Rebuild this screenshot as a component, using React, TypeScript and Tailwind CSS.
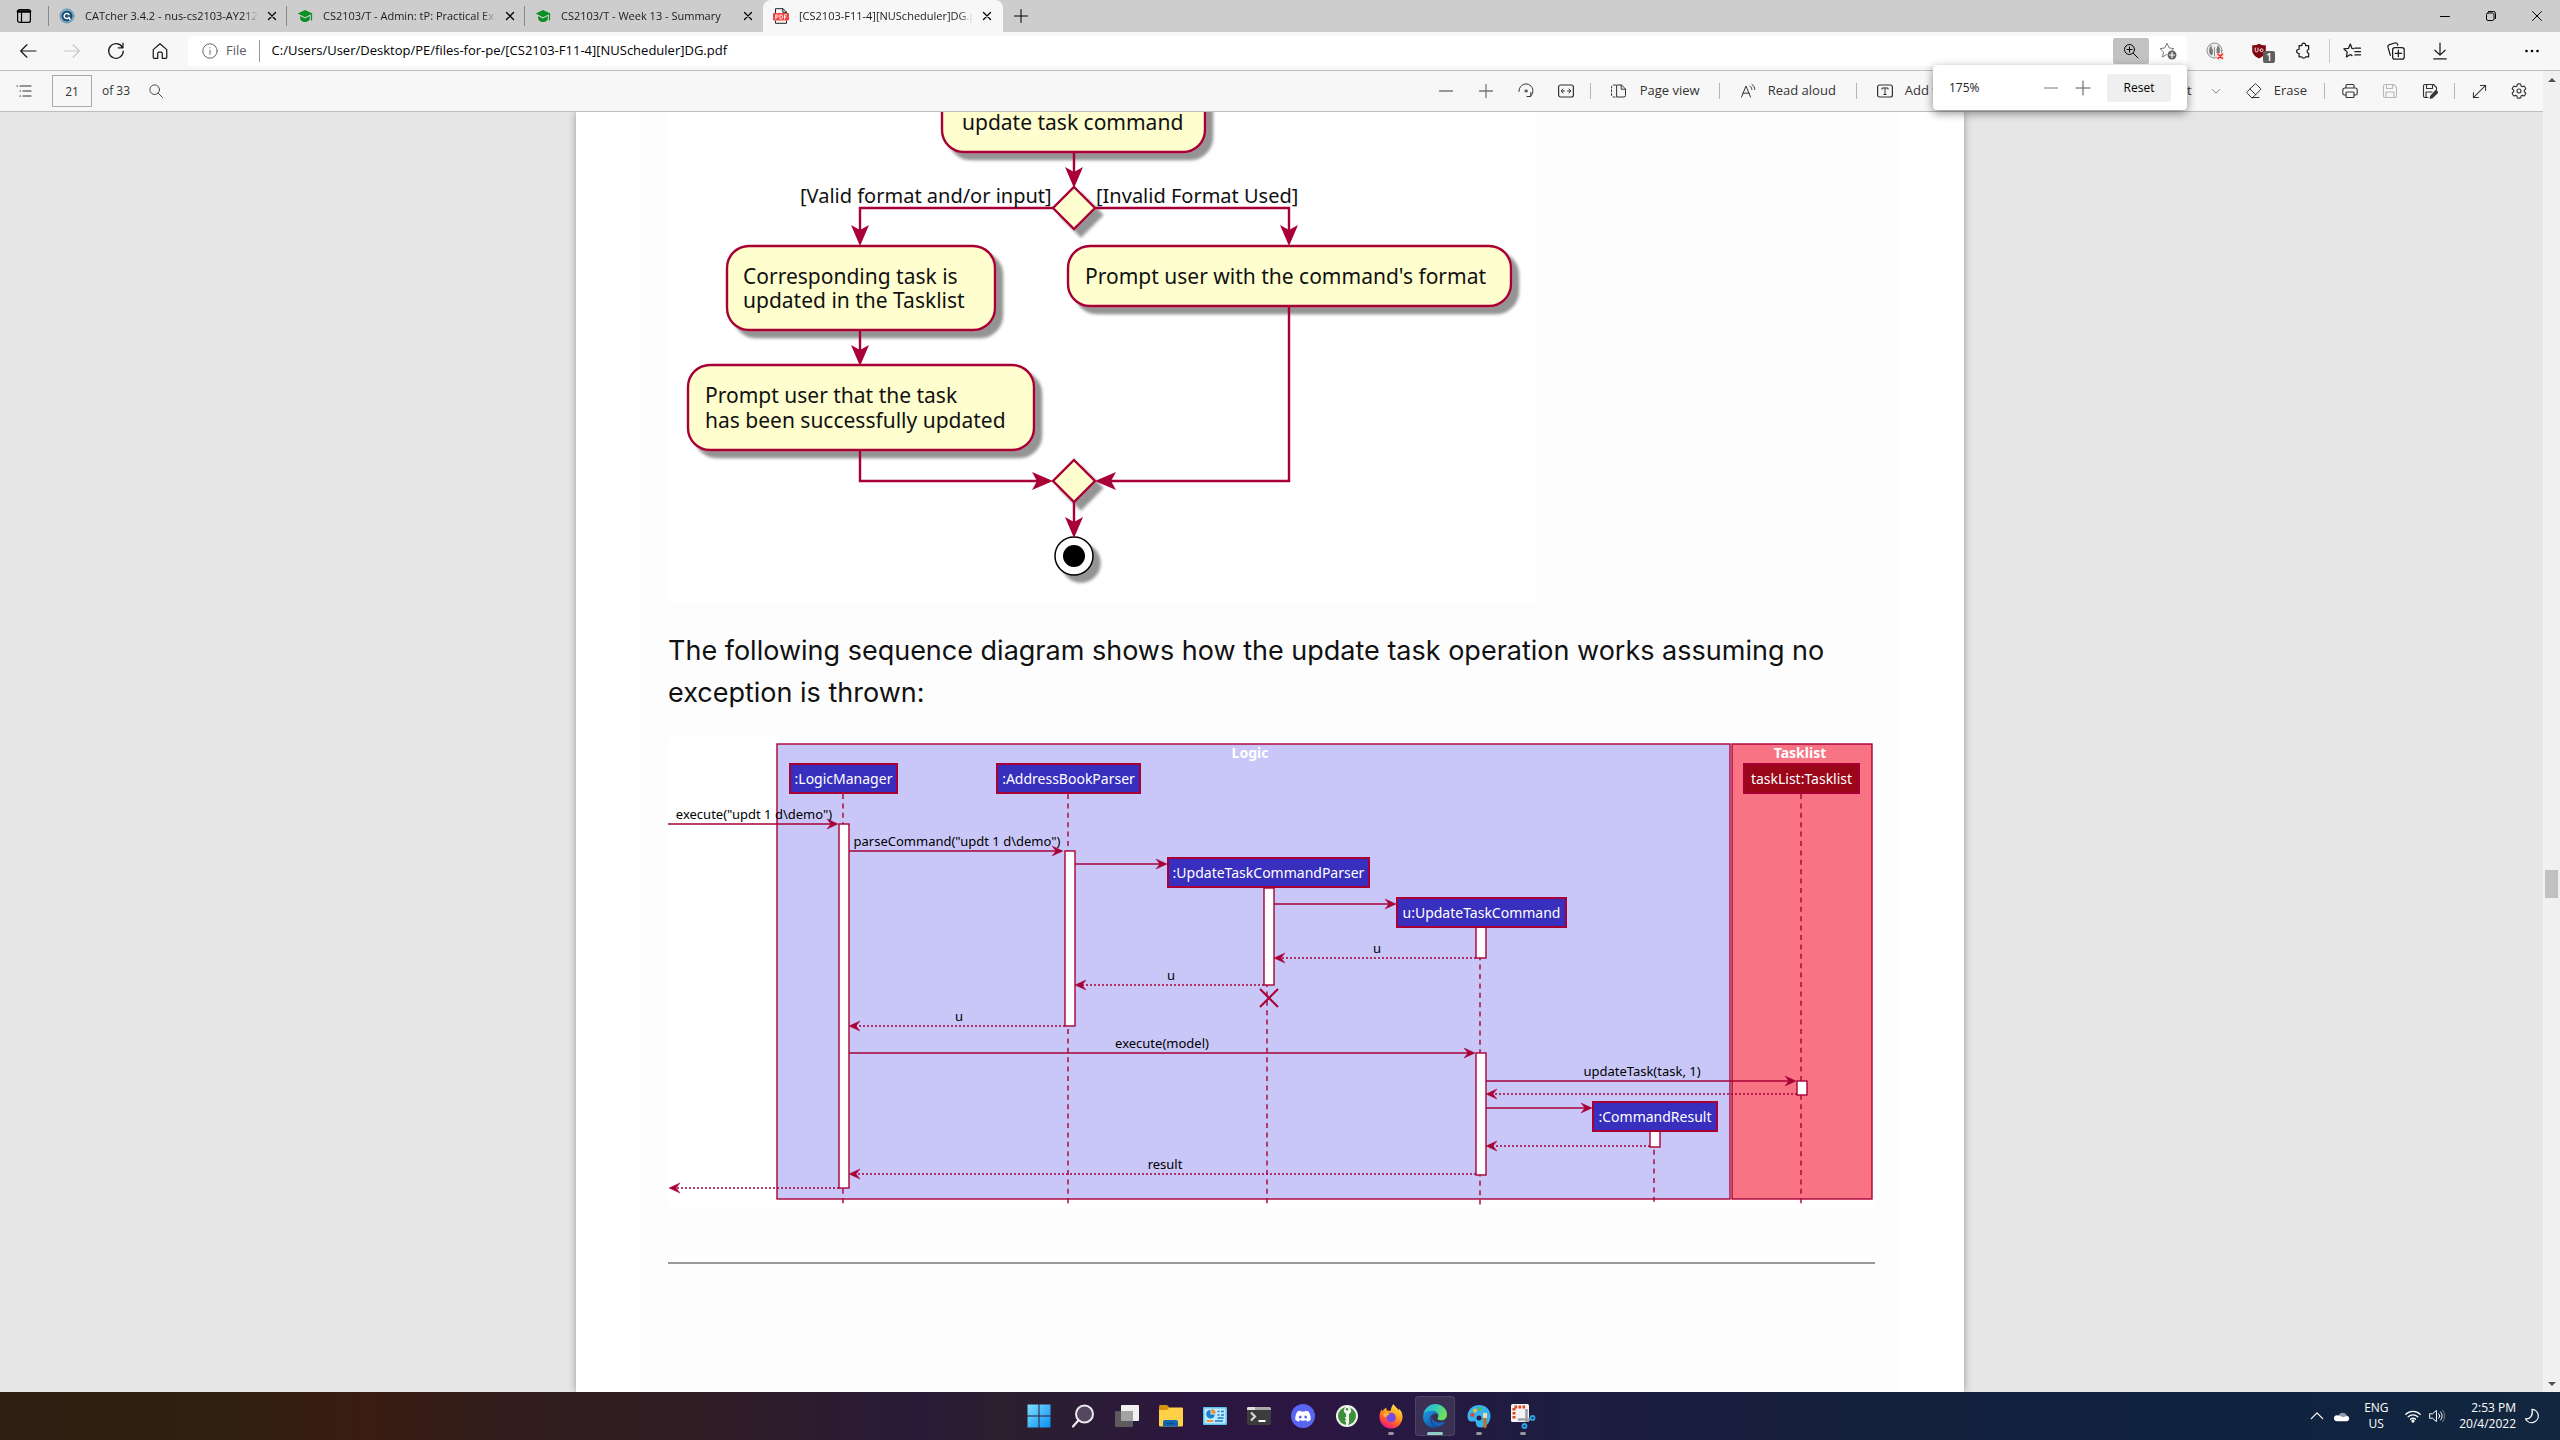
import type { ReactNode } from "react";

const RED = "#a80036";

/* ------------------------------------------------------------------ icons */

type IconProps = { children: ReactNode; className?: string; box?: number; sw?: number };

function Icon({ children, className = "size-4", box = 16, sw = 1 }: IconProps) {
  return (
    <svg
      viewBox={`0 0 ${box} ${box}`}
      className={`shrink-0 ${className}`}
      fill="none"
      stroke="currentColor"
      strokeWidth={sw}
      strokeLinecap="round"
      strokeLinejoin="round"
      aria-hidden="true"
    >
      {children}
    </svg>
  );
}

const CloseIcon = () => (
  <Icon className="size-3" box={12} sw={1.3}>
    <path d="M2.5 2.5l7 7M9.5 2.5l-7 7" />
  </Icon>
);

const CatcherIcon = () => (
  <Icon>
    <circle cx="8" cy="8" r="7" fill="#8fbdd6" stroke="#5f93b3" />
    <circle cx="8" cy="8" r="5.6" fill="#1d4f70" stroke="none" />
    <path d="M10 6.6A2.6 2.6 0 1 0 10 9.4L11 11.6" stroke="#fff" strokeWidth="1.5" />
  </Icon>
);

const CapIcon = () => (
  <Icon>
    <path d="M8 2L15.5 5.6 8 9.2.8 5.6z" fill="#0d8f23" stroke="none" />
    <path d="M3.2 8v3.4C4.5 13 6.300 14 8 14s3.500-1 4.800-2.600V8L8 10.400z" fill="#0d8f23" stroke="none" />
    <path d="M14.500 6v6" stroke="#0d8f23" strokeWidth="1.200" />
  </Icon>
);

const PdfIcon = () => (
  <Icon>
    <path d="M2.500 5V.7h7.500l3.500 3.500V5M2.500 13v2.300h11V13" stroke="#222" />
    <path d="M9.800.7v3.600h3.700" stroke="#222" />
    <rect x="0" y="5" width="16" height="7.600" rx="1" fill="#f04343" stroke="none" />
    <path d="M2.800 11V6.800h1.100a1.200 1.200 0 0 1 0 2.500H2.800M7 6.800V11h.8c2.600 0 2.600-4.200 0-4.200zM11.500 11V6.800h2M11.500 8.900h1.600" stroke="#fff" strokeWidth=".9" />
  </Icon>
);

/* ---------------------------------------------------------------- tab bar */

function Tab({ title, icon, active = false, last = false }: { title: string; icon: ReactNode; active?: boolean; last?: boolean }) {
  return (
    <div
      className={
        active
          ? "flex h-8 w-60 items-center rounded-t-lg bg-[#f7f7f7] pr-2 pl-2.5"
          : "flex h-8 w-[238px] items-center pl-2.5"
      }
    >
      <button className="flex min-w-0 flex-1 items-center gap-2.5 text-left">
        {icon}
        <span className="min-w-0 flex-1 overflow-hidden text-[11px] leading-4 whitespace-nowrap text-[#1b1b1b] [mask-image:linear-gradient(to_right,black_92%,transparent)]">
          {title}
        </span>
      </button>
      <button aria-label={`Close ${title}`} className="ml-1.5 flex size-4 items-center justify-center text-black">
        <CloseIcon />
      </button>
      {!active && <span className={last ? "ml-1.5 h-5 w-px" : "ml-1.5 h-5 w-px bg-[#8a8a8a]"} />}
    </div>
  );
}

function TabBar() {
  return (
    <div className="flex h-8 items-center bg-[#cdcdcd]">
      <button aria-label="Tab actions" className="flex h-8 w-12 items-center justify-center text-black">
        <Icon sw={1.2}>
          <rect x="1.600" y="1.600" width="12.800" height="12.800" rx="2" />
          <path d="M2 3.500h12" strokeWidth="2.600" />
          <path d="M5.500 4v10" />
        </Icon>
      </button>
      <span className="h-5 w-px bg-[#8a8a8a]" />
      <Tab title="CATcher 3.4.2 - nus-cs2103-AY2122S2" icon={<CatcherIcon />} />
      <Tab title="CS2103/T - Admin: tP: Practical Exam" icon={<CapIcon />} />
      <Tab title="CS2103/T - Week 13 - Summary" icon={<CapIcon />} last />
      <Tab title="[CS2103-F11-4][NUScheduler]DG.pdf" icon={<PdfIcon />} active />
      <button aria-label="New tab" className="flex h-8 w-9 items-center justify-center text-black">
        <Icon>
          <path d="M8 1.500v13M1.500 8h13" />
        </Icon>
      </button>
      <div className="ml-auto flex">
        <button aria-label="Minimize" className="flex h-8 w-[46px] items-center justify-center text-black">
          <Icon className="size-3" box={12}>
            <path d="M1.500 6.500h9" />
          </Icon>
        </button>
        <button aria-label="Restore" className="flex h-8 w-[46px] items-center justify-center text-black">
          <Icon className="size-3" box={12}>
            <rect x="1.500" y="3" width="7.500" height="7.500" rx="1.500" />
            <path d="M3.500 1.500h5a2 2 0 0 1 2 2v5" />
          </Icon>
        </button>
        <button aria-label="Close window" className="flex h-8 w-[46px] items-center justify-center text-black">
          <Icon className="size-3" box={12}>
            <path d="M1.500 1.500l9 9M10.500 1.500l-9 9" />
          </Icon>
        </button>
      </div>
    </div>
  );
}

/* ------------------------------------------------------------ address bar */

function ZoomPopup() {
  return (
    <div className="absolute top-[29px] right-0 z-20 flex h-[45px] w-[254px] items-center rounded bg-white pr-4 pl-4 shadow-[0_3px_10px_rgba(0,0,0,0.45)]">
      <span className="flex-1 text-[12px] text-[#222]">175%</span>
      <button aria-label="Zoom out" className="flex size-8 items-center justify-center text-[#777]">
        <Icon>
          <path d="M1.500 8h13" />
        </Icon>
      </button>
      <button aria-label="Zoom in" className="flex size-8 items-center justify-center text-[#555]">
        <Icon>
          <path d="M8 1v14M1 8h14" />
        </Icon>
      </button>
      <button className="ml-2 h-7 w-16 rounded-xs bg-[#efefef] text-[12px] font-medium text-black">Reset</button>
    </div>
  );
}

function NavButton({ label, children, tone = "text-[#1b1b1b]" }: { label: string; children: ReactNode; tone?: string }) {
  return (
    <button aria-label={label} className={`relative flex h-8 w-11 shrink-0 items-center justify-center ${tone}`}>
      {children}
    </button>
  );
}

function AddressBar() {
  return (
    <div className="flex h-[39px] items-center border-b border-[#bdbdbd] bg-[#f7f7f7] pl-1.5">
      <NavButton label="Back">
        <Icon className="size-[18px]" sw={1.1}>
          <path d="M15 8H1.500M7 2.500L1.500 8 7 13.500" />
        </Icon>
      </NavButton>
      <NavButton label="Forward" tone="text-[#c8c8c8]">
        <Icon className="size-[18px]" sw={1.1}>
          <path d="M1 8h13.500M9 2.500L14.500 8 9 13.500" />
        </Icon>
      </NavButton>
      <NavButton label="Refresh">
        <Icon className="size-[18px]" sw={1.1}>
          <path d="M13.800 5A6.500 6.500 0 1 0 14.500 8M14.200 1v4.200H10" />
        </Icon>
      </NavButton>
      <NavButton label="Home">
        <Icon className="size-[18px]" sw={1.1}>
          <path d="M2 6.800L8 1.500l6 5.300v7a.7.7 0 0 1-.7.7H10V10a1 1 0 0 0-1-1H7a1 1 0 0 0-1 1v4.500H2.700a.7.700 0 0 1-.7-.7z" />
        </Icon>
      </NavButton>
      <div className="relative ml-1.5 flex h-[30px] min-w-0 flex-1 items-center rounded bg-white pl-3.5">
        <Icon className="size-4 text-[#666]">
          <circle cx="8" cy="8" r="7.200" />
          <path d="M8 7.200v4M8 4.700v.2" />
        </Icon>
        <label htmlFor="address" className="ml-2 text-[13px] text-[#5c5c66]">
          File
        </label>
        <span className="ml-3 h-[22px] w-px bg-[#999]" />
        <input
          id="address"
          defaultValue="C:/Users/User/Desktop/PE/files-for-pe/[CS2103-F11-4][NUScheduler]DG.pdf"
          className="ml-3 min-w-0 flex-1 bg-transparent text-[13px] text-black outline-none"
        />
        <button aria-label="Zoom" className="flex h-[26px] w-9 items-center justify-center rounded-xs bg-[#c2c2c2] text-black">
          <Icon>
            <circle cx="6.500" cy="6.500" r="5" />
            <path d="M10.200 10.200l4.800 4.800M6.500 4v5M4 6.500h5" />
          </Icon>
        </button>
        <button aria-label="Add to favorites" className="flex h-[26px] w-[38px] items-center justify-center text-[#777]">
          <Icon className="size-[18px]" box={18}>
            <path d="M7.500 12.500L3.600 15l.9-5L1 6.600l4.800-.7L8 1.300l2.200 4.600 4.600.7-2.300 2" />
            <circle cx="13" cy="13" r="4.500" fill="#666" stroke="none" />
            <path d="M13 10.600v4.800M10.600 13h4.800" stroke="#fff" strokeWidth="1.200" />
          </Icon>
        </button>
        <ZoomPopup />
      </div>
      <div className="flex items-center pl-1.5">
        <NavButton label="Site data extension">
          <Icon className="size-[18px]" box={18}>
            <circle cx="8.500" cy="8.500" r="7.500" fill="#ececec" stroke="#8c8c8c" />
            <path d="M5 4c-2 3-2 6.500 0 9l1.500-1V8L5.500 6zM8.500 5.500V14M12.500 4c1.500 3 1.500 6 0 8L11 11V7z" fill="#777" stroke="#777" strokeWidth=".8" />
            <rect x="11" y="11" width="6.500" height="6.500" fill="#fbd5d5" stroke="none" />
            <path d="M12 12l4.500 4.500M16.500 12L12 16.500" stroke="#e22" strokeWidth="1.400" />
          </Icon>
        </NavButton>
        <NavButton label="uBlock Origin">
          <Icon className="size-4">
            <path d="M8 .8C6 2 4 2.300 1.200 2.300v5.200C1.200 11 4.500 13.800 8 15.500c3.500-1.700 6.800-4.500 6.800-8V2.300C12 2.300 10 2 8 .8z" fill="#800610" stroke="none" />
            <path d="M4.200 5v2.500a1.400 1.400 0 0 0 2.800 0V5M9 7.200a1.500 1.500 0 1 0 3 0 1.500 1.500 0 1 0-3 0" stroke="#fff" strokeWidth=".9" />
          </Icon>
          <span className="absolute top-4 right-1.5 h-3 w-3 rounded-xs bg-[#5f5f5f] text-center text-[10px] leading-3 font-semibold text-white">1</span>
        </NavButton>
        <NavButton label="Extensions">
          <Icon className="size-[18px]" sw={1.1}>
            <path d="M5 3.200h2a1.700 1.700 0 1 1 3.300 0H13v3.300a1.800 1.800 0 0 0 0 3.500v3.200h-2.800a1.700 1.700 0 0 1-3.200 0H4.500V10a1.800 1.800 0 1 1 0-3.500V3.200z" />
          </Icon>
        </NavButton>
        <span className="ml-1 h-6 w-px bg-[#c8c8c8]" />
        <NavButton label="Favorites">
          <Icon className="size-[18px]" sw={1.1}>
            <path d="M9.500 6L8 5.700 6.500 1.800 4.800 5.700l-4 .5 3 2.800-.8 4.300 3.500-2.200 1.500 1M10.500 5.500h5M10.500 8.500h5M10.500 11.500h5" />
          </Icon>
        </NavButton>
        <NavButton label="Collections">
          <Icon className="size-[18px]" sw={1.1}>
            <rect x="5" y="5" width="10.300" height="10.300" rx="2" />
            <path d="M10.100 7.300v5.700M7.300 10.100H13M3 11.800L.9 4.800A2 2 0 0 1 2.200 2.400L7 .9a2 2 0 0 1 2.400 1.300l.2.700" />
          </Icon>
        </NavButton>
        <NavButton label="Downloads">
          <Icon className="size-[18px]" sw={1.1}>
            <path d="M8 1v10.500M3.500 7.300L8 11.700l4.500-4.400M2.500 15h11" />
          </Icon>
        </NavButton>
      </div>
      <button aria-label="Settings and more" className="mr-1.5 ml-12 flex h-8 w-11 items-center justify-center text-black">
        <Icon className="size-4">
          <g fill="currentColor" stroke="none">
            <circle cx="2.500" cy="8" r="1.300" />
            <circle cx="8" cy="8" r="1.300" />
            <circle cx="13.500" cy="8" r="1.300" />
          </g>
        </Icon>
      </button>
    </div>
  );
}

/* ------------------------------------------------------------ PDF toolbar */

function ToolButton({ label, children, tone = "text-[#333]" }: { label: string; children: ReactNode; tone?: string }) {
  return (
    <button aria-label={label} className={`flex size-10 items-center justify-center ${tone}`}>
      {children}
    </button>
  );
}

const Rule = () => <span className="h-4 w-px shrink-0 bg-[#b5b5b5]" />;

function PdfToolbar() {
  return (
    <div className="flex h-[41px] shrink-0 items-center border-b border-[#bdbdbd] bg-[#f7f7f7] text-[13px] text-[#333]">
      <div className="flex items-center pl-1">
        <ToolButton label="Contents">
          <Icon sw={1.2}>
            <path d="M1 3h.5M4 3h11M4 8h.5M7 8h8M4 13h.5M7 13h8" />
          </Icon>
        </ToolButton>
        <input
          aria-label="Page number"
          defaultValue="21"
          className="ml-2 h-8 w-10 border border-[#aaa] bg-[#f7f7f7] text-center text-[12px] outline-none"
        />
        <span className="ml-2.5 text-[12px]">of 33</span>
        <div className="ml-1.5">
          <ToolButton label="Find">
            <Icon className="size-[14px]">
              <circle cx="6.500" cy="6.500" r="5.500" />
              <path d="M10.500 10.500l5 5" />
            </Icon>
          </ToolButton>
        </div>
      </div>
      <div className="ml-auto flex items-center">
        <ToolButton label="Zoom out" tone="text-[#777]">
          <Icon sw={1.300}>
            <path d="M1.500 8h13" />
          </Icon>
        </ToolButton>
        <ToolButton label="Zoom in" tone="text-[#777]">
          <Icon sw={1.300}>
            <path d="M8 1.500v13M1.500 8h13" />
          </Icon>
        </ToolButton>
        <ToolButton label="Rotate">
          <Icon>
            <path d="M1 8.500A7 7 0 1 1 13 12.800M12.800 9.500v4H9" />
            <circle cx="8" cy="8" r="1.100" />
          </Icon>
        </ToolButton>
        <ToolButton label="Fit to page">
          <Icon>
            <rect x=".6" y="2" width="14.800" height="12" rx="2" strokeWidth="1.200" />
            <path d="M3.500 8h3M9.500 8h3M5 6L3.200 8 5 10M11 6l1.800 2L11 10" />
          </Icon>
        </ToolButton>
        <span className="ml-1 h-4 w-px bg-[#b5b5b5]" />
        <button className="flex h-8 items-center gap-3.5 px-[19px]">
          <Icon>
            <path d="M5.500 2H3.500a2 2 0 0 0-2 2v8a2 2 0 0 0 2 2h2" strokeDasharray="2 1.800" />
            <path d="M7 2h4.500l4 4v6.500A1.500 1.500 0 0 1 14 14H7zM11.200 2v4.200h4" />
          </Icon>
          Page view
        </button>
        <Rule />
        <button className="flex h-8 items-center gap-3 px-5">
          <Icon>
            <path d="M1.500 14L6 3l4.500 11M3 10.200h6M10 3c1.200.8 1.800 2 1.800 3.500M12 1.500c1.800 1.200 2.800 3 2.800 5" />
          </Icon>
          Read aloud
        </button>
        <Rule />
        <button className="flex h-8 items-center gap-3 px-5">
          <Icon>
            <rect x=".6" y="2" width="14.800" height="12" rx="2" strokeWidth="1.200" />
            <path d="M5 6.200V5h6v1.200M8 5v6.500M6.800 11.500h2.400" />
          </Icon>
          Add text
        </button>
        <Rule />
        <button className="flex h-8 w-[88px] items-center gap-3 pl-4">
          <Icon>
            <path d="M3 2l5 12 5-12M5 8h6" />
          </Icon>
          Draw
        </button>
        <button className="flex h-8 w-[127px] items-center justify-end gap-3">
          <Icon>
            <path d="M4 9h8v3l-4 3H4zM5 9V5l6-3v7" />
          </Icon>
          Highlight
        </button>
        <button aria-label="Highlight colors" className="ml-4 flex size-4 items-center justify-center text-[#777]">
          <Icon className="size-2.5" sw={1.500}>
            <path d="M2 5.500l6 6 6-6" />
          </Icon>
        </button>
        <button className="flex h-8 items-center gap-3 px-[17px] pl-[22px]">
          <Icon>
            <path d="M5.500 14.500L1.300 10.300a1.200 1.200 0 0 1 0-1.700L8.600 1.300a1.200 1.200 0 0 1 1.700 0l4 4a1.200 1.200 0 0 1 0 1.700l-7.500 7.500zM4 6l5.800 5.800M5.500 14.500H13" />
          </Icon>
          Erase
        </button>
        <Rule />
        <span className="w-[5px]" />
        <ToolButton label="Print">
          <Icon sw={1.100}>
            <path d="M4 5V2.500a1 1 0 0 1 1-1h6a1 1 0 0 1 1 1V5M4 12H2.300A1.500 1.500 0 0 1 .8 10.500V7a2 2 0 0 1 2-2h10.400a2 2 0 0 1 2 2v3.500a1.500 1.500 0 0 1-1.500 1.500H12" />
            <rect x="4" y="9" width="8" height="5.500" rx="1" />
          </Icon>
        </ToolButton>
        <ToolButton label="Save" tone="text-[#b9b9b9]">
          <Icon sw={1.100}>
            <path d="M1.500 3A1.500 1.500 0 0 1 3 1.500h8.500l3 3V13a1.500 1.500 0 0 1-1.500 1.500H3A1.500 1.500 0 0 1 1.500 13zM4.500 1.500v4h6v-4M4 14.500v-5.500h8v5.500" />
          </Icon>
        </ToolButton>
        <ToolButton label="Save as">
          <Icon sw={1.100}>
            <path d="M14.500 7V4.500l-3-3H3A1.500 1.500 0 0 0 1.500 3v10A1.500 1.500 0 0 0 3 14.500h3M4.500 1.500v4h6v-4M4 14.500V9h6" />
            <path d="M14 7.500l1.800 1.800-5.300 5.400-2.300.6.600-2.400z" fill="currentColor" />
          </Icon>
        </ToolButton>
        <span className="ml-1 h-4 w-px bg-[#b5b5b5]" />
        <span className="w-1" />
        <ToolButton label="Full screen">
          <Icon className="size-[15px]" sw={1.100}>
            <path d="M1.500 14.500l13-13M9 1.500h5.500V7M1.500 9v5.500H7" />
          </Icon>
        </ToolButton>
        <ToolButton label="Settings">
          <Icon className="size-[18px]" box={24} sw={1.500}>
            <path d="M12 2.500c.8 0 1.500.1 2.200.2l.5 2.500 1.700 1 2.500-.8a9.500 9.500 0 0 1 2.200 3.800l-2 1.800v2l2 1.800a9.500 9.500 0 0 1-2.200 3.800l-2.500-.8-1.700 1-.5 2.500a10 10 0 0 1-4.400 0l-.5-2.500-1.700-1-2.500.8a9.500 9.500 0 0 1-2.200-3.800l2-1.800v-2l-2-1.800a9.500 9.500 0 0 1 2.200-3.800l2.500.8 1.700-1 .5-2.500c.7-.1 1.400-.2 2.200-.2z" />
            <circle cx="12" cy="12" r="2.600" />
          </Icon>
        </ToolButton>
        <span className="w-1" />
      </div>
    </div>
  );
}

/* -------------------------------------------------------- activity diagram */

type Dir = "down" | "left" | "right";

function BigHead({ x, y, dir }: { x: number; y: number; dir: Dir }) {
  const turn = { down: 0, left: 90, right: -90 }[dir];
  return <path d="M-9 -21L0 0L9 -21L0 -16z" transform={`translate(${x} ${y}) rotate(${turn})`} fill={RED} stroke="none" />;
}

function ActivityDiagram() {
  return (
    <svg viewBox="668 112 868 490" className="block w-[868px] max-w-full bg-white" role="img" aria-label="Update task activity diagram">
      <defs>
        <filter id="shade" x="-20%" y="-20%" width="150%" height="150%">
          <feDropShadow dx="7" dy="7" stdDeviation="1.800" floodColor="#000" floodOpacity="0.42" />
        </filter>
      </defs>
      <g fill="#fefece" stroke={RED} strokeWidth="2.400">
        <g filter="url(#shade)">
          <rect x="942" y="60" width="263" height="92" rx="22" />
          <rect x="727" y="246" width="268" height="84" rx="22" />
          <rect x="1068" y="246" width="443" height="60" rx="22" />
          <rect x="688" y="365" width="346" height="85" rx="22" />
          <path d="M1074 187l21 21-21 21-21-21z" />
          <path d="M1074 460l21 21-21 21-21-21z" />
        </g>
        <circle cx="1074" cy="556" r="19" fill="#fff" stroke="#000" strokeWidth="1.500" filter="url(#shade)" />
        <circle cx="1074" cy="556" r="11" fill="#000" stroke="none" />
        <path
          fill="none"
          d="M1074 152v30M1053 208H860v34M1095 208h194v34M860 330v30M860 450v31h186M1289 306v175h-188M1074 502v30"
        />
        <BigHead x={1074} y={188} dir="down" />
        <BigHead x={860} y={246} dir="down" />
        <BigHead x={1289} y={246} dir="down" />
        <BigHead x={860} y={366} dir="down" />
        <BigHead x={1074} y={538} dir="down" />
        <BigHead x={1053} y={481} dir="right" />
        <BigHead x={1095} y={481} dir="left" />
      </g>
      <g className="font-['Noto_Sans',sans-serif] text-[21px]" fill="#111">
        <text x="962" y="130">update task command</text>
        <text x="743" y="284">Corresponding task is</text>
        <text x="743" y="308">updated in the Tasklist</text>
        <text x="1085" y="284">Prompt user with the command's format</text>
        <text x="705" y="403">Prompt user that the task</text>
        <text x="705" y="428">has been successfully updated</text>
      </g>
      <g className="font-['Noto_Sans',sans-serif] text-[20px]" fill="#111">
        <text x="800" y="203">[Valid format and/or input]</text>
        <text x="1096" y="203">[Invalid Format Used]</text>
      </g>
    </svg>
  );
}

/* -------------------------------------------------------- sequence diagram */

const participants = [
  { name: ":LogicManager", x: 790, y: 764, w: 107, life: 843, from: 794 },
  { name: ":AddressBookParser", x: 997, y: 764, w: 143, life: 1068, from: 794 },
  { name: ":UpdateTaskCommandParser", x: 1168, y: 858, w: 201, life: 1267, from: 888 },
  { name: "u:UpdateTaskCommand", x: 1397, y: 898, w: 169, life: 1480, from: 927 },
  { name: ":CommandResult", x: 1593, y: 1102, w: 124, life: 1654, from: 1131 },
  { name: "taskList:Tasklist", x: 1744, y: 764, w: 115, life: 1801, from: 794, dark: true },
];

const activations = [
  [839, 824, 364],
  [1065, 851, 175],
  [1264, 888, 97],
  [1476, 927, 31],
  [1476, 1053, 122],
  [1650, 1131, 16],
  [1797, 1081, 14],
];

type Message = { y: number; from: number; to: number; label?: string; lx?: number; back?: boolean };

const messages: Message[] = [
  { y: 824, from: 668, to: 838, label: 'execute("updt 1 d\\demo")', lx: 754 },
  { y: 851, from: 849, to: 1063, label: 'parseCommand("updt 1 d\\demo")', lx: 957 },
  { y: 864, from: 1075, to: 1167 },
  { y: 904, from: 1274, to: 1396 },
  { y: 958, from: 1476, to: 1274, label: "u", lx: 1377, back: true },
  { y: 985, from: 1264, to: 1075, label: "u", lx: 1171, back: true },
  { y: 1026, from: 1065, to: 849, label: "u", lx: 959, back: true },
  { y: 1053, from: 849, to: 1475, label: "execute(model)", lx: 1162 },
  { y: 1081, from: 1486, to: 1796, label: "updateTask(task, 1)", lx: 1642 },
  { y: 1094, from: 1797, to: 1486, back: true },
  { y: 1108, from: 1486, to: 1592 },
  { y: 1146, from: 1650, to: 1486, back: true },
  { y: 1174, from: 1476, to: 849, label: "result", lx: 1165, back: true },
  { y: 1188, from: 839, to: 669, back: true },
];

function SequenceDiagram() {
  return (
    <svg viewBox="668 737 1207 470" className="block w-full bg-white" role="img" aria-label="Update task sequence diagram">
      <g stroke={RED} strokeWidth="1.400">
        <rect x="777" y="744" width="953" height="455" fill="#c9c7f8" />
        <rect x="1732" y="744" width="140" height="455" fill="#f87383" />
        {participants.map((p) => (
          <path key={p.name} d={`M${p.life} ${p.from}V1205`} strokeDasharray="5 4.400" />
        ))}
        {activations.map(([x, y, h]) => (
          <rect key={`${x}-${y}`} x={x} y={y} width="10" height={h} fill="#fff" />
        ))}
        {participants.map((p) => (
          <rect key={p.name} x={p.x} y={p.y} width={p.w} height="29" fill={p.dark ? "#9b0619" : "#382fbe"} strokeWidth="2" />
        ))}
        {messages.map((m) => {
          const s = m.to > m.from ? -1 : 1;
          return (
            <g key={m.y}>
              <path d={`M${m.from} ${m.y}H${m.to + s * 4}`} strokeDasharray={m.back ? "2 2" : undefined} />
              <path
                d={`M${m.to} ${m.y}L${m.to + s * 11} ${m.y - 5}L${m.to + s * 7} ${m.y}L${m.to + s * 11} ${m.y + 5}z`}
                fill={RED}
                strokeWidth=".5"
              />
            </g>
          );
        })}
        <path d="M1260 989l18 18M1278 989l-18 18" strokeWidth="2" />
      </g>
      <g className="font-['Noto_Sans',sans-serif] text-[14px]" fill="#fff" textAnchor="middle">
        {participants.map((p) => (
          <text key={p.name} x={p.x + p.w / 2} y={p.y + 20}>
            {p.name}
          </text>
        ))}
      </g>
      <g className="font-['Noto_Sans',sans-serif] text-[14px] font-bold" fill="#fff" textAnchor="middle">
        <text x="1250" y="758">Logic</text>
        <text x="1800" y="758">Tasklist</text>
      </g>
      <g className="font-['Noto_Sans',sans-serif] text-[13px]" fill="#000" textAnchor="middle">
        {messages.map((m) =>
          m.label ? (
            <text key={m.y} x={m.lx} y={m.y - 5}>
              {m.label}
            </text>
          ) : null,
        )}
      </g>
    </svg>
  );
}

/* ---------------------------------------------------------------- document */

function DocumentView() {
  return (
    <main className="flex min-h-0 flex-1 justify-center overflow-hidden bg-[#e6e6e6] pr-[3px]">
      <article className="flex w-full max-w-[1388px] justify-center bg-white px-16 shadow-[0_0_8px_rgba(0,0,0,0.35)]">
        <div className="w-full bg-[#fdfdfd] pr-[25px] pl-7">
          <ActivityDiagram />
          <p className="mt-7 font-['Inter',sans-serif] text-[27px] leading-[42px] text-[#111]">
            The following sequence diagram shows how the update task operation works assuming no exception is thrown:
          </p>
          <div className="mt-[23px]">
            <SequenceDiagram />
          </div>
          <hr className="mt-[55px] border-0 border-t-2 border-[#999]" />
        </div>
      </article>
    </main>
  );
}

function Scrollbar() {
  return (
    <div className="flex w-[17px] shrink-0 flex-col items-center bg-[#f0f0f0] text-[#505050]">
      <button aria-label="Scroll up" className="flex h-[17px] items-center">
        <svg viewBox="0 0 8 4" className="w-2" aria-hidden="true">
          <path d="M0 4l4-4 4 4z" fill="currentColor" />
        </svg>
      </button>
      <div className="flex w-full flex-1 flex-col items-center">
        <div className="basis-[60.8%]" />
        <div className="h-7 w-[13px] bg-[#c1c1c1]" />
      </div>
      <button aria-label="Scroll down" className="flex h-[17px] items-center">
        <svg viewBox="0 0 8 4" className="w-2" aria-hidden="true">
          <path d="M0 0l4 4 4-4z" fill="currentColor" />
        </svg>
      </button>
    </div>
  );
}

/* ----------------------------------------------------------------- taskbar */

const StartIcon = () => (
  <>
    <defs>
      <linearGradient id="win" x1="0" y1="0" x2="1" y2="1">
        <stop offset="0" stopColor="#7fe0ff" />
        <stop offset="1" stopColor="#0a8ef5" />
      </linearGradient>
    </defs>
    <path d="M0.500 0.500h11v11h-11zM12.500 0.500h11v11h-11zM0.500 12.500h11v11h-11zM12.500 12.500h11v11h-11z" fill="url(#win)" />
  </>
);

const SearchIcon = () => (
  <>
    <circle cx="13.500" cy="10" r="8.500" fill="#54475f" stroke="#ececf0" strokeWidth="2" />
    <path d="M7.300 16.500L2 22.500" stroke="#ececf0" strokeWidth="2.200" strokeLinecap="round" />
  </>
);

const TaskViewIcon = () => (
  <>
    <rect x="0" y="7" width="18" height="16" rx="1" fill="#5d5b5e" />
    <rect x="6" y="1" width="18" height="16" rx="1" fill="#f0f0f0" />
    <rect x="6" y="7" width="12" height="10" fill="#a3a3a3" />
  </>
);

const FolderIcon = () => (
  <>
    <path d="M0 2.500A1.500 1.500 0 0 1 1.500 1H8l2.500 2.500V7H0z" fill="#d8930b" />
    <path d="M0 6h8l2.500-2.500H23a1 1 0 0 1 1 1V21.500a1 1 0 0 1-1 1H1a1 1 0 0 1-1-1z" fill="#ffd04a" />
    <path d="M4 22.500V18a2 2 0 0 1 2-2h11a2 2 0 0 1 2 2v4.500z" fill="#1267b4" />
    <path d="M7.500 19.500h8" stroke="#0a4b8c" strokeWidth="1.500" />
  </>
);

const PanelIcon = () => (
  <>
    <rect x="0" y="3" width="24" height="18" rx="1" fill="#5bc2ee" />
    <rect x="1.500" y="4.500" width="21" height="15" fill="#bfeaff" />
    <path d="M7.500 6a4.200 4.200 0 1 0 4.200 4.500H7.500z" fill="#1d7fce" />
    <path d="M8.500 5.200v4.300h4.300a4.300 4.300 0 0 0-4.300-4.300z" fill="#f28a1c" />
    <path d="M14.500 7.500h2M18 7.500h3M14.500 11h2M18 11h3M14.500 14h6" stroke="#1d7fce" strokeWidth="1.600" />
    <path d="M3.500 17h7" stroke="#f28a1c" strokeWidth="1.600" />
    <path d="M12 17h8" stroke="#1d7fce" strokeWidth="1.600" />
  </>
);

const TerminalIcon = () => (
  <>
    <rect x="0" y="3" width="24" height="18" rx="1.500" fill="#3c3c3c" />
    <path d="M0 6V4.500A1.500 1.500 0 0 1 1.500 3h21A1.500 1.500 0 0 1 24 4.500V6z" fill="#a9a9a9" />
    <path d="M0 6V4.500A1.500 1.500 0 0 1 1.500 3H8v3z" fill="#dedede" />
    <path d="M4 8.500l4 4-4 4" stroke="#d6d6d6" strokeWidth="2.200" fill="none" />
    <path d="M11.500 17h7" stroke="#fff" strokeWidth="2" />
  </>
);

const DiscordIcon = () => (
  <>
    <circle cx="12" cy="12" r="12" fill="#5865f2" />
    <path
      d="M17.600 7.600a12 12 0 0 0-3-.9l-.5.9a11 11 0 0 0-4.200 0l-.5-.9a12 12 0 0 0-3 .9C4.600 10.500 4.100 13.300 4.300 16c1.200.9 2.400 1.500 3.700 1.800l.8-1.300-1.200-.6.300-.2a8.700 8.700 0 0 0 8.200 0l.3.2-1.200.6.800 1.300c1.300-.3 2.500-.9 3.700-1.800.3-3.200-.5-5.900-2.100-8.400z"
      fill="#fff"
    />
    <ellipse cx="9.300" cy="13" rx="1.400" ry="1.600" fill="#5865f2" />
    <ellipse cx="14.700" cy="13" rx="1.400" ry="1.600" fill="#5865f2" />
  </>
);

const KeyIcon = () => (
  <>
    <circle cx="12" cy="12" r="11" fill="#eef5ea" />
    <circle cx="12" cy="12" r="9" fill="#3d8f3a" />
    <path d="M12 2.500a4 4 0 0 1 2 7.500v9l-1.500 2.500H11V10a4 4 0 0 1 1-7.500z" fill="#f4f4f4" />
    <circle cx="12" cy="5.300" r="1.200" fill="#3d8f3a" />
    <path d="M10 14h2M10 17h2" stroke="#f4f4f4" strokeWidth="1.500" />
  </>
);

const FirefoxIcon = () => (
  <>
    <defs>
      <linearGradient id="fox" x1="0.800" y1="0" x2="0.300" y2="1">
        <stop offset="0" stopColor="#fff04a" />
        <stop offset="0.450" stopColor="#ff9a1f" />
        <stop offset="0.750" stopColor="#ff4a3d" />
        <stop offset="1" stopColor="#e31587" />
      </linearGradient>
    </defs>
    <path
      d="M14.500 0c1 2.500 4 4 5.500 6.500.2-.8 0-1.500-.2-2C22.500 7 23.700 10 23.500 13A11.500 11.500 0 0 1 .5 13C.4 9.500 1.500 7 3 5.200c0 .8.200 1.500.6 2C4.500 5.500 6 4.500 7.300 3.800c-.1 1 .2 2 .8 2.700 1.300-.3 2.500 0 3.400.5C12 5 12.500 2 14.500 0z"
      fill="url(#fox)"
    />
    <circle cx="12" cy="13.500" r="4.800" fill="#7a4ae0" />
    <path d="M4 10c2-2 5-1.500 7 .5-2 0-3.500 1-3.500 2.500C5.500 13.500 4 12 4 10z" fill="#ffb52e" />
  </>
);

const EdgeIcon = () => (
  <>
    <defs>
      <linearGradient id="edgeTop" x1="0" y1="0" x2="1" y2="0.400">
        <stop offset="0" stopColor="#2bb1ee" />
        <stop offset="0.500" stopColor="#35c9c0" />
        <stop offset="1" stopColor="#6ce35a" />
      </linearGradient>
      <linearGradient id="edgeLow" x1="0" y1="0" x2="0.800" y2="1">
        <stop offset="0" stopColor="#1f9de5" />
        <stop offset="1" stopColor="#0c4fa0" />
      </linearGradient>
    </defs>
    <path d="M.3 10.500C1.500 4.500 6.500 0 12.300 0 19.500 0 24 5.500 24 10.500c0 3.500-2.500 5.800-5.800 5.800-2.500 0-3.700-.8-3.700-1.700 0-.6.900-1 .9-2.800C15.400 9 12.500 7 9 7 5 7 2 8.500.3 10.500z" fill="url(#edgeTop)" />
    <path d="M0 12.500C.5 9 4 6.800 8.500 6.800c3.500 0 6.500 2 6.800 4.500-.8-1-2-1.500-3.300-1.500-2.700 0-4.700 2.200-4.700 5.200 0 4.200 3.700 7.500 8 7.500-1.200.9-3 1.500-4.800 1.500C5 23.700 0 18.500 0 12.500z" fill="url(#edgeLow)" />
    <path d="M8.700 12.800C7.500 17 10 22.500 15.500 22.500c2.800-.7 5-2.400 6.300-4.500.3-.5-.1-.8-.6-.5-4.500 2-11.500 1-12.500-4.700z" fill="#1463b8" />
  </>
);

const PaintIcon = () => (
  <>
    <path d="M12 1C5 1 .5 6.500.5 12c0 4.500 2.500 6 5 5.500 2-.4 3.500 0 3.500 2 0 2.500 1.500 4 4.500 4 6 0 10-5.500 10-11.500C23.500 5.500 18.500 1 12 1z" fill="#36b3ee" />
    <circle cx="5.500" cy="11" r="2" fill="#e8402a" />
    <circle cx="8" cy="6.500" r="2" fill="#f6c12b" />
    <circle cx="13" cy="4.800" r="2" fill="#4fbf4a" />
    <circle cx="12" cy="14" r="2.500" fill="#2a1f48" />
    <path d="M16 9h4v5h-4z" fill="#f1d9b0" />
    <path d="M16.300 14h3.400v8.500a1.700 1.700 0 0 1-3.400 0z" fill="#b5742c" />
  </>
);

const SnipIcon = () => (
  <>
    <rect x="0" y="0" width="18" height="18" rx="1.500" fill="#f3f3f3" />
    <path d="M3 14.500V3h12" stroke="#e0451f" strokeWidth="3" strokeDasharray="2.600 1.400" fill="none" />
    <path d="M15.500 5v13M7 15.500h12" stroke="#9aa0a6" strokeWidth="2.600" />
    <circle cx="21.500" cy="14" r="2" fill="none" stroke="#2aa5e8" strokeWidth="1.800" />
    <circle cx="13.500" cy="22" r="2" fill="none" stroke="#2aa5e8" strokeWidth="1.800" />
  </>
);

const apps: { name: string; art: ReactNode; state?: "open" | "focus" }[] = [
  { name: "Start", art: <StartIcon /> },
  { name: "Search", art: <SearchIcon /> },
  { name: "Task View", art: <TaskViewIcon /> },
  { name: "File Explorer", art: <FolderIcon /> },
  { name: "Control Panel", art: <PanelIcon /> },
  { name: "Terminal", art: <TerminalIcon /> },
  { name: "Discord", art: <DiscordIcon /> },
  { name: "KeePassXC", art: <KeyIcon /> },
  { name: "Firefox", art: <FirefoxIcon />, state: "open" },
  { name: "Microsoft Edge", art: <EdgeIcon />, state: "focus" },
  { name: "Paint", art: <PaintIcon />, state: "open" },
  { name: "Snipping Tool", art: <SnipIcon />, state: "open" },
];

function Taskbar() {
  return (
    <footer className="grid h-12 shrink-0 grid-cols-[1fr_auto_1fr] items-center bg-[linear-gradient(to_right,#2e1e12_0%,#30200f_9%,#3a1d12_14%,#311d1c_20%,#2f1d26_28%,#2a1a38_36%,#2c1f2e_39%,#2b1640_47%,#2b1642_52%,#1d1d40_61%,#15203c_72%,#0f2340_86%,#12263f_100%)] text-white">
      <span />
      <nav aria-label="Pinned apps" className="flex gap-1 pl-0.5">
        {apps.map((app) => (
          <button
            key={app.name}
            aria-label={app.name}
            className={
              app.state === "focus"
                ? "relative flex size-10 items-center justify-center rounded border border-white/10 bg-white/10"
                : "relative flex size-10 items-center justify-center"
            }
          >
            <svg viewBox="0 0 24 24" className="size-6 overflow-visible" aria-hidden="true">
              {app.art}
            </svg>
            {app.state === "open" && <span className="absolute bottom-px h-[3px] w-1.5 rounded-full bg-[#9a94a4]" />}
            {app.state === "focus" && <span className="absolute bottom-0 h-[3px] w-4 rounded-full bg-[#8fcfc6]" />}
          </button>
        ))}
      </nav>
      <div className="flex items-center justify-end pr-5 text-[12px] leading-4">
        <button aria-label="Show hidden icons" className="mr-2.5">
          <Icon className="size-3.5" sw={1.400}>
            <path d="M1.500 11L8 4.500 14.500 11" />
          </Icon>
        </button>
        <button aria-label="OneDrive">
          <Icon>
            <path d="M4.500 8a4.500 4.500 0 0 1 8.500-.500L8 11z" fill="#8f9aac" stroke="none" />
            <path d="M3 13.200a3 3 0 0 1 0-6c2 0 4 .8 6 2l4-1.500a2.800 2.800 0 0 1 0 5.500z" fill="#fff" stroke="none" />
          </Icon>
        </button>
        <button className="ml-3.5 w-6 text-center">
          ENG
          <br />
          US
        </button>
        <button aria-label="Network" className="ml-[17px]">
          <Icon sw={1.300}>
            <path d="M.8 6.300a10.200 10.200 0 0 1 14.400 0M3.200 8.800a6.800 6.800 0 0 1 9.600 0M5.500 11.200a3.500 3.500 0 0 1 5 0" />
            <circle cx="8" cy="13" r="1" fill="currentColor" />
          </Icon>
        </button>
        <button aria-label="Volume" className="ml-2">
          <Icon>
            <path d="M1 5.800h2.500L7.500 2.500v11L3.500 10.200H1zM9.800 5.800a3.200 3.200 0 0 1 0 4.400M11.700 4a6 6 0 0 1 0 8" />
            <path d="M13.600 2.300a8.500 8.500 0 0 1 0 11.400" opacity=".4" />
          </Icon>
        </button>
        <button className="ml-3.5 text-right">
          2:53 PM
          <br />
          20/4/2022
        </button>
        <button aria-label="Focus assist" className="ml-2">
          <Icon sw={1.200}>
            <path d="M8 1.300a6.700 6.700 0 1 1-6.500 9.500C6 11.500 9.300 7.500 8 1.300z" />
          </Icon>
        </button>
      </div>
    </footer>
  );
}

export default function App() {
  return (
    <div className="flex h-screen flex-col overflow-hidden font-['Open_Sans',sans-serif]">
      <TabBar />
      <AddressBar />
      <div className="flex min-h-0 flex-1">
        <div className="flex min-w-0 flex-1 flex-col">
          <PdfToolbar />
          <DocumentView />
        </div>
        <Scrollbar />
      </div>
      <Taskbar />
    </div>
  );
}
